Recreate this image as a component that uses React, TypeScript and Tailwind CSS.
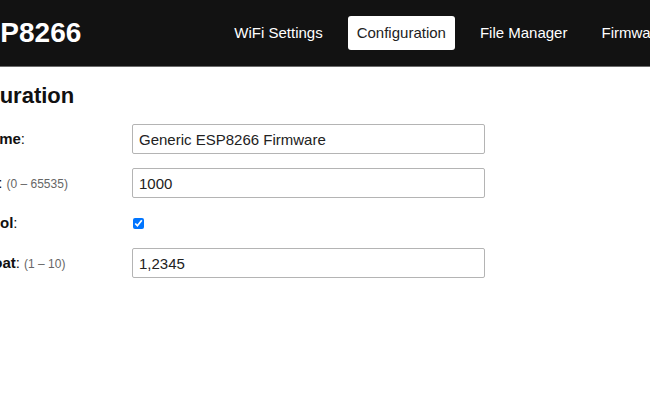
import { useState } from "react";

const navItems = ["WiFi Settings", "Configuration", "File Manager", "Firmware"];

function Header() {
  return (
    <header className="flex h-[67px] items-center border-b border-[#6b6b6b] bg-[#121212] pl-[43px]">
      <h1 className="text-[28px] font-bold leading-none text-white">ESP8266</h1>
      <nav className="ml-[144px] flex shrink-0 items-center gap-[16px]">
        {navItems.map((item) => (
          <a
            key={item}
            href="#"
            className={
              item === "Configuration"
                ? "whitespace-nowrap rounded-[3px] bg-white px-[9px] py-[8px] text-[15px] leading-[18px] text-[#222]"
                : "whitespace-nowrap px-[9px] py-[8px] text-[15px] leading-[18px] text-white"
            }
          >
            {item}
          </a>
        ))}
      </nav>
    </header>
  );
}

function Label({ name, hint }: { name: string; hint?: string }) {
  return (
    <label className="w-[152px] shrink-0 whitespace-nowrap text-[15px] text-[#111]">
      <b>{name}</b>:
      {hint && <span className="ml-[4px] text-[12px] text-[#666]">{hint}</span>}
    </label>
  );
}

export default function App() {
  const [name, setName] = useState("Generic ESP8266 Firmware");
  const [num, setNum] = useState("1000");
  const [flag, setFlag] = useState(true);
  const [flt, setFlt] = useState("1,2345");

  const inputCls =
    "h-[30px] w-[353px] rounded-[2px] border border-[#b4b4b4] px-[6px] text-[15px] text-[#222] outline-none";

  return (
    <div className="h-[400px] w-[650px] overflow-hidden bg-white font-['Liberation_Sans',Arial,sans-serif]">
      <div className="-ml-[80px] w-[900px]">
        <Header />
        <main className="pl-[10px]">
          <h2 className="mt-[16px] text-[22px] font-bold leading-[26px] text-[#111]">
            Configuration
          </h2>
          <form className="mt-[15px] pl-[50px]">
            <div className="mb-[14px] flex items-center">
              <Label name="Name" />
              <input className={inputCls} value={name} onChange={(e) => setName(e.target.value)} />
            </div>
            <div className="mb-[10px] flex items-center">
              <Label name="Int" hint="(0 – 65535)" />
              <input className={inputCls} value={num} onChange={(e) => setNum(e.target.value)} />
            </div>
            <div className="mb-[10px] flex h-[30px] items-center">
              <Label name="Bool" />
              <input
                type="checkbox"
                className="m-0 ml-[1px] h-[11px] w-[11px]"
                checked={flag}
                onChange={(e) => setFlag(e.target.checked)}
              />
            </div>
            <div className="flex items-center">
              <Label name="Float" hint="(1 – 10)" />
              <input className={inputCls} value={flt} onChange={(e) => setFlt(e.target.value)} />
            </div>
          </form>
        </main>
      </div>
    </div>
  );
}
